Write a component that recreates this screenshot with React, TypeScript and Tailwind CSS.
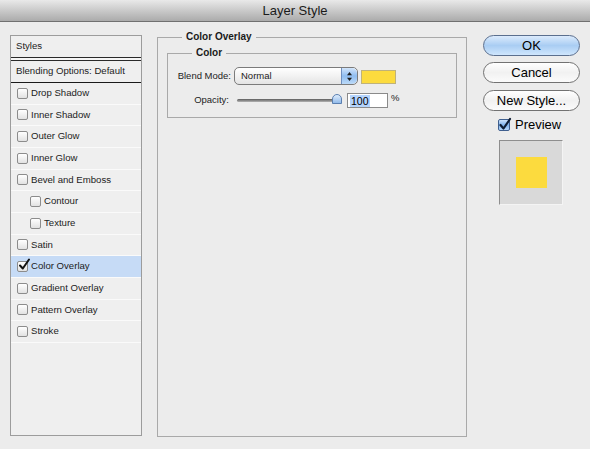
import React from 'react';

const FONT = { fontFamily: '"Liberation Sans", Arial, sans-serif' };

const effects: { label: string; indent?: boolean; checked?: boolean }[] = [
  { label: 'Drop Shadow' },
  { label: 'Inner Shadow' },
  { label: 'Outer Glow' },
  { label: 'Inner Glow' },
  { label: 'Bevel and Emboss' },
  { label: 'Contour', indent: true },
  { label: 'Texture', indent: true },
  { label: 'Satin' },
  { label: 'Color Overlay', checked: true },
  { label: 'Gradient Overlay' },
  { label: 'Pattern Overlay' },
  { label: 'Stroke' },
];

function SmallBox({ checked }: { checked?: boolean }) {
  return (
    <span className="relative w-[11px] h-[11px] shrink-0 rounded-[2px] border border-[#8c8c8c] bg-gradient-to-b from-[#ffffff] to-[#e2e2e2]">
      {checked && (
        <svg
          width="13"
          height="13"
          viewBox="0 0 13 13"
          className="absolute left-[0px] top-[-4px]"
          aria-hidden="true"
        >
          <path d="M2 7.5 L4.8 10.5 L11 1.5" fill="none" stroke="#111" strokeWidth="2" strokeLinecap="round" strokeLinejoin="round" />
        </svg>
      )}
    </span>
  );
}

function StylesPanel() {
  return (
    <div className="w-[132px] h-[401px] border border-[#9c9c9c] bg-[#efefef] flex flex-col text-[9.6px] text-[#1c1c1c]">
      <div className="h-[21px] flex items-center pl-[5px]">Styles</div>
      <div className="h-[1px] bg-[#2a2a2a]" />
      <div className="h-[2px] bg-[#f6f6f6]" />
      <div className="h-[1px] bg-[#2a2a2a]" />
      <div className="h-[21px] flex items-center pl-[5px]">Blending Options: Default</div>
      <div className="h-[1px] bg-[#1a1a1a]" />
      {effects.map((e) => (
        <div
          key={e.label}
          className={
            'h-[21.67px] shrink-0 flex items-center gap-[3px] border-b border-[#fafafa] ' +
            (e.indent ? 'pl-[19px] ' : 'pl-[6px] ') +
            (e.checked ? 'bg-[#c6dbf6]' : '')
          }
        >
          <SmallBox checked={e.checked} />
          <span>{e.label}</span>
        </div>
      ))}
    </div>
  );
}

function AquaButton({ label, primary }: { label: string; primary?: boolean }) {
  return (
    <button
      className={
        'w-[97px] h-[21px] rounded-full border text-[13px] leading-none text-black flex items-center justify-center ' +
        (primary
          ? 'border-[#5b6f8e] bg-gradient-to-b from-[#dcebfc] via-[#a9cdf3] to-[#cfe6fd]'
          : 'border-[#727272] bg-gradient-to-b from-[#ffffff] via-[#f1f1f1] to-[#fbfbfb]')
      }
    >
      {label}
    </button>
  );
}

function SelectStepper() {
  return (
    <span className="w-[16px] h-full rounded-r-[5px] border-l border-[#6f8fbf] bg-gradient-to-b from-[#d2e5fb] via-[#8fbdf0] to-[#bcdaf8] flex items-center justify-center">
      <svg width="7" height="11" viewBox="0 0 7 11" aria-hidden="true">
        <path d="M3.5 1 L6 4.2 H1 Z" fill="#1f1f1f" />
        <path d="M3.5 10 L6 6.8 H1 Z" fill="#1f1f1f" />
      </svg>
    </span>
  );
}

export default function App() {
  return (
    <div style={FONT} className="w-[590px] h-[449px] bg-[#ececec] flex flex-col overflow-hidden">
      <div className="h-[22px] shrink-0 flex items-center justify-center bg-gradient-to-b from-[#e9e9e9] to-[#ababab] border-b border-[#707070] text-[13px] text-[#1a1a1a]">
        Layer Style
      </div>

      <div className="flex items-start pt-[9px] pl-[10px]">
        <div className="mt-[4px]">
          <StylesPanel />
        </div>

        <fieldset className="ml-[15px] w-[310px] h-[406px] border border-[#a9a9a9] px-[9px] pt-[4px]">
          <legend className="ml-[15px] px-[4px] text-[10px] font-bold leading-[12px] text-[#1a1a1a]">
            Color Overlay
          </legend>
          <fieldset className="w-[290px] h-[71px] border border-[#a9a9a9] px-[9px] pt-[8px] flex flex-col gap-[8px]">
            <legend className="ml-[15px] px-[4px] text-[10px] font-bold leading-[12px] text-[#1a1a1a]">
              Color
            </legend>
            <div className="h-[18px] flex items-center text-[9.5px] text-[#1c1c1c] whitespace-nowrap">
              <span className="w-[54px] shrink-0 text-right">Blend Mode:</span>
              <div className="ml-[3px] w-[124px] shrink-0 h-[18px] rounded-[5px] border border-[#7b7b7b] bg-gradient-to-b from-[#ffffff] via-[#f2f2f2] to-[#e4e4e4] flex items-center overflow-hidden">
                <span className="flex-1 pl-[6px]">Normal</span>
                <SelectStepper />
              </div>
              <span className="ml-[3px] mt-[2px] w-[35px] h-[14px] shrink-0 bg-[#fcdb3e] border border-[#bfb27a]" />
            </div>
            <div className="h-[15px] flex items-center text-[9.5px] text-[#1c1c1c] whitespace-nowrap">
              <span className="w-[52px] shrink-0 text-right">Opacity:</span>
              <div className="relative ml-[8px] w-[106px] shrink-0 h-[15px] flex items-center">
                <span className="w-[100px] h-[3px] rounded-full bg-gradient-to-b from-[#5c5c5c] to-[#b5b5b5]" />
                <svg
                  width="10"
                  height="10"
                  viewBox="0 0 10 10"
                  className="absolute right-[1px] top-[1px]"
                  aria-hidden="true"
                >
                  <defs>
                    <linearGradient id="thumb" x1="0" y1="0" x2="0" y2="1">
                      <stop offset="0" stopColor="#e4f0fd" />
                      <stop offset="1" stopColor="#8db8ea" />
                    </linearGradient>
                  </defs>
                  <path d="M0.5 9.5 V5 A4.5 4.5 0 0 1 9.5 5 V9.5 Z" fill="url(#thumb)" stroke="#5b7fb0" strokeWidth="1" />
                </svg>
              </div>
              <div className="ml-[4px] w-[41px] shrink-0 h-[15px] bg-white border border-[#8a8a8a] flex items-center pl-[2px] text-[10.5px] text-black">
                <span className="bg-[#b4d4fd] px-[1px] leading-[12px]">100</span>
              </div>
              <span className="ml-[3px] self-start text-[9.5px] leading-[10px]">%</span>
            </div>
          </fieldset>
        </fieldset>

        <div className="ml-[16px] mt-[4px] w-[97px] flex flex-col">
          <AquaButton label="OK" primary />
          <div className="mt-[6px]">
            <AquaButton label="Cancel" />
          </div>
          <div className="mt-[7px]">
            <AquaButton label="New Style..." />
          </div>
          <div className="mt-[7px] ml-[15px] h-[13px] flex items-center gap-[5px] text-[13px] text-black">
            <span className="relative w-[12px] h-[12px] rounded-[2px] border border-[#3f5f8f] bg-gradient-to-b from-[#cfe3fb] via-[#7fb2ec] to-[#b6d6fa]">
              <svg width="14" height="14" viewBox="0 0 14 14" className="absolute left-[-1px] top-[-3px]" aria-hidden="true">
                <path d="M2.5 8 L5.5 11.5 L12 2" fill="none" stroke="#0f1d33" strokeWidth="2.2" strokeLinecap="round" strokeLinejoin="round" />
              </svg>
            </span>
            <span>Preview</span>
          </div>
          <div className="mt-[9px] ml-[16px] w-[64px] h-[65px] bg-[#d9d9d9] border-t border-l border-[#8e8e8e] border-r border-b border-r-[#f4f4f4] border-b-[#f4f4f4] flex items-center justify-center">
            <span className="w-[31px] h-[31px] bg-[#fcdb3e]" />
          </div>
        </div>
      </div>
    </div>
  );
}
